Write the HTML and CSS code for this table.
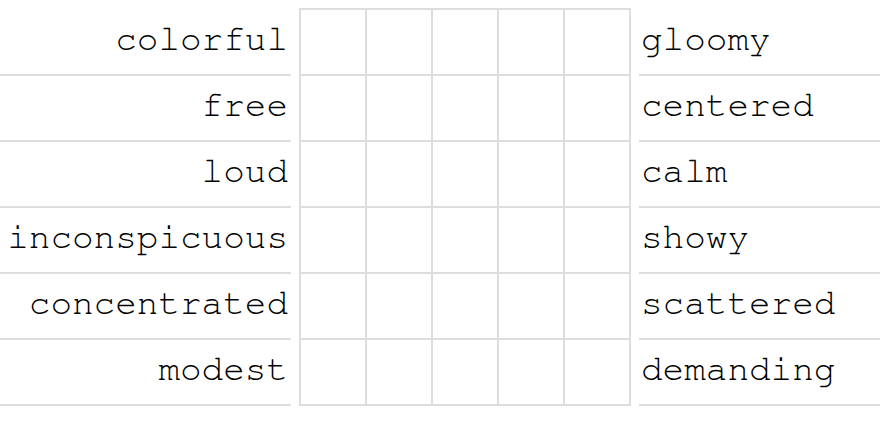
FILE: index.html
```html
<!DOCTYPE html>
<html>
<head>
<meta charset="utf-8">
<link rel="stylesheet" href="styles.css">
</head>
<body>
<div class="board">
  <div class="col left">
    <div class="label">colorful</div>
    <div class="label">free</div>
    <div class="label">loud</div>
    <div class="label">inconspicuous</div>
    <div class="label">concentrated</div>
    <div class="label">modest</div>
  </div>
  <div class="grid">
    <div class="cell"></div><div class="cell"></div><div class="cell"></div><div class="cell"></div><div class="cell"></div>
    <div class="cell"></div><div class="cell"></div><div class="cell"></div><div class="cell"></div><div class="cell"></div>
    <div class="cell"></div><div class="cell"></div><div class="cell"></div><div class="cell"></div><div class="cell"></div>
    <div class="cell"></div><div class="cell"></div><div class="cell"></div><div class="cell"></div><div class="cell"></div>
    <div class="cell"></div><div class="cell"></div><div class="cell"></div><div class="cell"></div><div class="cell"></div>
    <div class="cell"></div><div class="cell"></div><div class="cell"></div><div class="cell"></div><div class="cell"></div>
  </div>
  <div class="col right">
    <div class="label">gloomy</div>
    <div class="label">centered</div>
    <div class="label">calm</div>
    <div class="label">showy</div>
    <div class="label">scattered</div>
    <div class="label">demanding</div>
  </div>
</div>
</body>
</html>
```
FILE: styles.css
```css
html, body {
  margin: 0;
  padding: 0;
  background: #fff;
}
body {
  font-family: "Nimbus Mono PS", "Nimbus Mono L", "FreeMono", "Courier New", Courier, "Liberation Mono", monospace;
  font-size: 36px;
  color: #000;
}
.board {
  display: flex;
  gap: 8px;
  margin-top: 8px;
}
.col {
  padding-top: 2px;
}
.left {
  width: 291px;
  text-align: right;
}
.right {
  flex: 1;
  text-align: left;
}
.label {
  height: 64px;
  line-height: 58px;
  border-bottom: 2px solid #ddd;
  white-space: nowrap;
}
.left .label {
  padding-right: 3px;
}
.right .label {
  padding-left: 2px;
}
.grid {
  display: grid;
  grid-template-columns: repeat(5, 66px);
  grid-auto-rows: 66px;
  border-top: 2px solid #ddd;
  border-left: 2px solid #ddd;
  align-self: flex-start;
}
.cell {
  border-right: 2px solid #ddd;
  border-bottom: 2px solid #ddd;
}
```
